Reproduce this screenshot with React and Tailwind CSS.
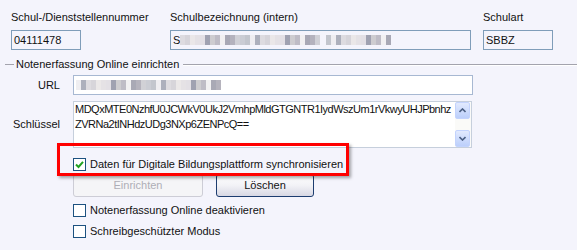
import React from "react";

const BLUR_A = ["#c9c9cf", "#e8e4e4", "#9a9aa8", "#d8d6da", "#b4b2bc", "#ecebef", "#8f92a3", "#c2c4cc", "#e0dde0", "#a8a6b2", "#d0ced4", "#f0eef0", "#9fa2b0", "#c6c4c8", "#b8bcc4", "#dedbe0"];

function Blur({ count, gapAt, color0 }) {
  const blocks = [];
  for (let i = 0; i < count; i++) {
    if (gapAt && gapAt.includes(i)) {
      blocks.push(<span key={i} className="inline-block w-[6px] h-[10px]" />);
      continue;
    }
    blocks.push(
      <span
        key={i}
        className="inline-block w-[5px] h-[10px]"
        style={{ backgroundColor: BLUR_A[(i * 7 + (color0 || 0)) % BLUR_A.length], opacity: 0.85 }}
      />
    );
  }
  return <span className="inline-flex items-center">{blocks}</span>;
}

function Check({ checked }) {
  return (
    <span className="w-[13px] h-[13px] border border-[#1c5180] bg-white flex items-center justify-center shrink-0">
      {checked && (
        <svg width="9" height="9" viewBox="0 0 9 9">
          <path d="M1 4.5 L3.5 7 L8 1.8" fill="none" stroke="#21a121" strokeWidth="2" />
        </svg>
      )}
    </span>
  );
}

function Arrow({ up }) {
  return (
    <div className="w-[15px] h-[17px] border border-[#c3d3fd] rounded-[2px] bg-gradient-to-b from-[#e2eafe] to-[#bccffb] flex items-center justify-center">
      <svg width="7" height="5" viewBox="0 0 7 5">
        <path d={up ? "M0.5 4 L3.5 1 L6.5 4" : "M0.5 1 L3.5 4 L6.5 1"} fill="none" stroke="#4d6185" strokeWidth="1.6" />
      </svg>
    </div>
  );
}

export default function App() {
  return (
    <div className="relative w-[577px] h-[250px] overflow-hidden bg-[#f4f4fc] text-[11px] leading-[13px] text-[#111] font-['Liberation_Sans',Arial,sans-serif]">
      <div className="flex pt-[11px]">
        <div className="ml-[11px] w-[70px]">
          <div>Schul-/Dienststellennummer</div>
          <div className="mt-[6px] h-[20px] border border-[#7f9db9] flex items-center pl-[2px] whitespace-nowrap">04111478</div>
        </div>
        <div className="ml-[89px] w-[301px]">
          <div>Schulbezeichnung (intern)</div>
          <div className="mt-[6px] h-[20px] border border-[#7f9db9] flex items-center pl-[2px] whitespace-nowrap overflow-hidden">
            <span>S</span>
            <Blur count={42} gapAt={[28]} color0={3} />
          </div>
        </div>
        <div className="ml-[12px] w-[70px]">
          <div>Schulart</div>
          <div className="mt-[6px] h-[20px] border border-[#7f9db9] flex items-center pl-[2px]">SBBZ</div>
        </div>
      </div>

      <div className="flex items-center mt-[8px]">
        <div className="ml-[5px] w-[9px] h-[2px] border-t border-[#a3a3ad] border-b-white" />
        <div className="px-[2px]">Notenerfassung Online einrichten</div>
        <div className="ml-[2px] flex-1 h-[2px] border-t border-[#a3a3ad] border-b border-b-white" />
      </div>

      <div className="flex items-center mt-[4px]">
        <div className="w-[60px] text-right">URL</div>
        <div className="ml-[13px] w-[400px] h-[20px] bg-white border border-[#a7b8d2] flex items-center pl-[2px] overflow-hidden">
          <Blur count={29} color0={5} />
        </div>
      </div>

      <div className="flex items-center mt-[6px]">
        <div className="w-[60px] text-right">Schlüssel</div>
        <div className="ml-[13px] w-[399px] h-[47px] bg-white border border-[#c6cfdc] flex">
          <div className="flex-1 pl-[1px] leading-[15px] tracking-[-0.5px] whitespace-nowrap overflow-hidden">
            <div>MDQxMTE0NzhfU0JCWkV0UkJ2VmhpMldGTGNTR1IydWszUm1rVkwyUHJPbnhz</div>
            <div>ZVRNa2tINHdzUDg3NXp6ZENPcQ==</div>
          </div>
          <div className="w-[16px] flex flex-col justify-between bg-[#fafaf8] pr-[1px]">
            <Arrow up />
            <Arrow />
          </div>
        </div>
      </div>

      <div className="flex items-center mt-[10px] pl-[73px]">
        <Check checked />
        <span className="ml-[4px] whitespace-nowrap">Daten für Digitale Bildungsplattform synchronisieren</span>
      </div>

      <div className="flex mt-[3px] pl-[73px]">
        <div className="w-[130px] h-[23px] rounded-[3px] border border-[#cdcdd6] bg-[#f5f5f7] text-[#aeaeb6] flex items-center justify-center">Einrichten</div>
        <div className="ml-[13px] w-[98px] h-[23px] rounded-[3px] border border-[#1d3d70] bg-gradient-to-b from-white via-[#f2f2f6] to-[#d8d8e4] flex items-center justify-center">Löschen</div>
      </div>

      <div className="flex items-center mt-[7px] pl-[73px]">
        <Check />
        <span className="ml-[4px]">Notenerfassung Online deaktivieren</span>
      </div>
      <div className="flex items-center mt-[8px] pl-[73px]">
        <Check />
        <span className="ml-[4px]">Schreibgeschützter Modus</span>
      </div>

      <div className="absolute left-[57px] top-[143px] w-[292px] h-[33px] border-[3px] border-[#ff0000] shadow-[2px_2px_3px_rgba(0,0,0,0.35)]" />
    </div>
  );
}
